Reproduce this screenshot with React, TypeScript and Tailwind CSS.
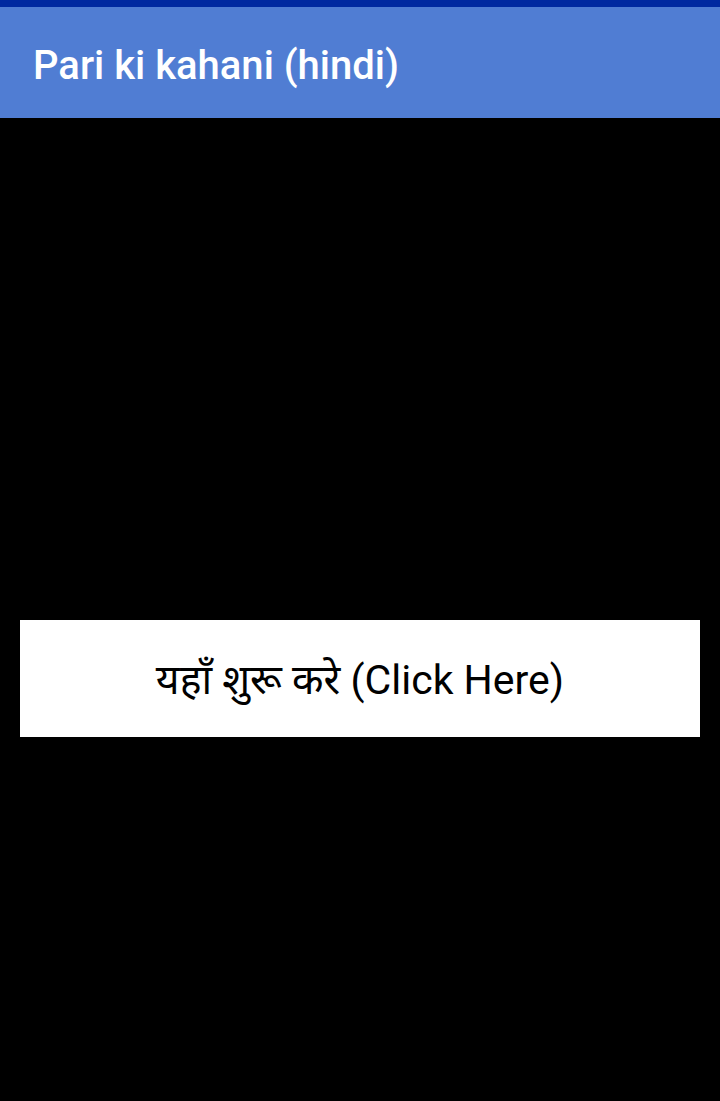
export default function App() {
  return (
    <div className="flex h-[1101px] w-[720px] flex-col bg-black font-['Roboto','Noto_Sans',sans-serif]">
      {/* status bar */}
      <div className="h-[7px] bg-[#0029a0]" />

      {/* app bar */}
      <div className="flex h-[111px] items-center bg-[#507dd3] px-[33px] pt-[6px]">
        <h1 className="text-[40px] font-medium leading-none text-white">Pari ki kahani (hindi)</h1>
      </div>

      <div className="px-[20px] pt-[502px]">
        <button className="flex h-[117px] w-full items-center justify-center bg-white pt-[5px] text-[41px] text-black">
          यहाँ शुरू करे (Click Here)
        </button>
      </div>
    </div>
  );
}
